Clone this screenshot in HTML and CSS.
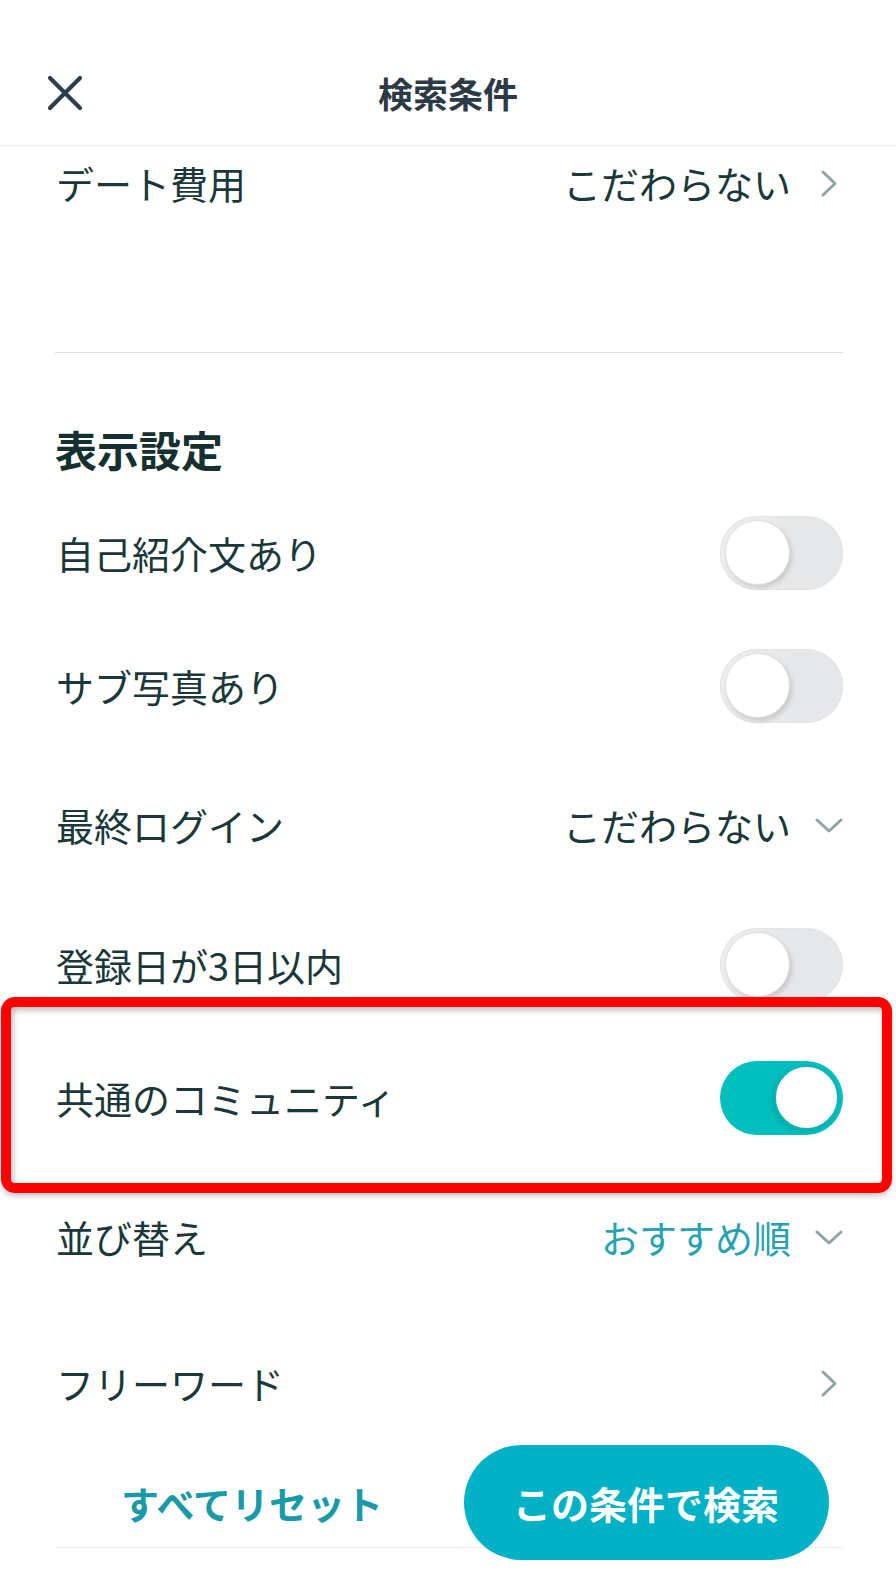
FILE: index.html
```html
<!DOCTYPE html>
<html lang="ja">
<head>
<meta charset="utf-8">
<title>検索条件</title>
<link rel="stylesheet" href="styles.css">
</head>
<body>
<div class="screen">
  <header class="topbar">
    <button class="close" aria-label="閉じる">
      <svg width="36" height="36" viewBox="0 0 36 36"><path d="M3 3 L33 33 M33 3 L3 33" stroke="#2c3e4c" stroke-width="4.2" stroke-linecap="round" fill="none"/></svg>
    </button>
    <h1 class="title">検索条件</h1>
    <span></span>
  </header>

  <main class="content">
    <div class="row row-top">
      <span class="label">デート費用</span>
      <span class="value">こだわらない<span class="icon"><svg width="16" height="27" viewBox="0 0 16 27"><path d="M2 2 L14 13.5 L2 25" stroke="#8ca5a6" stroke-width="3" stroke-linecap="round" stroke-linejoin="round" fill="none"/></svg></span></span>
    </div>

    <hr class="divider">

    <h2 class="section-title">表示設定</h2>

    <div class="row row-toggle">
      <span class="label">自己紹介文あり</span>
      <span class="toggle"><span class="knob"></span></span>
    </div>
    <div class="row row-toggle">
      <span class="label">サブ写真あり</span>
      <span class="toggle"><span class="knob"></span></span>
    </div>
    <div class="row row-select">
      <span class="label">最終ログイン</span>
      <span class="value">こだわらない<span class="icon"><svg width="28" height="15" viewBox="0 0 28 15"><path d="M2 2 L14 13 L26 2" stroke="#8ca5a6" stroke-width="3" stroke-linecap="round" stroke-linejoin="round" fill="none"/></svg></span></span>
    </div>
    <div class="row row-toggle">
      <span class="label">登録日が3日以内</span>
      <span class="toggle"><span class="knob"></span></span>
    </div>
    <div class="row row-toggle">
      <span class="label">共通のコミュニティ</span>
      <span class="toggle is-on"><span class="knob"></span></span>
    </div>
    <div class="row row-select">
      <span class="label">並び替え</span>
      <span class="value accent">おすすめ順<span class="icon"><svg width="28" height="15" viewBox="0 0 28 15"><path d="M2 2 L14 13 L26 2" stroke="#8ca5a6" stroke-width="3" stroke-linecap="round" stroke-linejoin="round" fill="none"/></svg></span></span>
    </div>
    <div class="row row-last">
      <span class="label">フリーワード</span>
      <span class="value"><span class="icon"><svg width="16" height="27" viewBox="0 0 16 27"><path d="M2 2 L14 13.5 L2 25" stroke="#8ca5a6" stroke-width="3" stroke-linecap="round" stroke-linejoin="round" fill="none"/></svg></span></span>
    </div>

    <div class="footer">
      <button class="reset">すべてリセット</button>
      <div class="submit-cell"><button class="submit">この条件で検索</button></div>
    </div>
  </main>

  <div class="highlight"></div>
</div>
</body>
</html>
```

FILE: styles.css
```css
* { box-sizing: border-box; }

html, body {
  margin: 0;
  padding: 0;
  background: #ffffff;
}

body {
  font-family: "Noto Sans CJK JP", "Noto Sans", sans-serif;
  color: #1a3839;
  overflow: hidden;
}

.screen {
  position: relative;
  width: 896px;
  height: 1576px;
  overflow: hidden;
}

.topbar {
  height: 146px;
  padding: 40px 47px 0 47px;
  display: grid;
  grid-template-columns: 1fr auto 1fr;
  align-items: center;
  border-bottom: 1px solid #eeeeee;
}

.close {
  width: 36px;
  height: 36px;
  padding: 0;
  border: 0;
  background: none;
  display: flex;
}

.title {
  margin: 0;
  font-size: 35px;
  font-weight: 700;
  color: #2c3a46;
  line-height: 40px;
}

.content {
  padding: 0 53px 0 55px;
}

.row {
  display: flex;
  align-items: center;
  justify-content: space-between;
}

.label {
  font-size: 38px;
  line-height: 48px;
  padding-left: 1px;
}

.value {
  display: flex;
  align-items: center;
  gap: 24px;
  font-size: 38px;
  line-height: 48px;
}

.value.accent {
  color: #27a2b2;
}

.icon {
  width: 28px;
  display: flex;
  justify-content: center;
  align-items: center;
}

.row-top {
  height: 74px;
  margin-bottom: 132px;
}

.divider {
  margin: 0;
  border: 0;
  height: 1px;
  background: #d9e1e1;
}

.section-title {
  margin: 0;
  padding: 72px 0 13px 0;
  font-size: 42px;
  line-height: 48px;
  font-weight: 700;
  color: #16302f;
}

.row-toggle { height: 133px; }
.row-select { height: 146px; }
.row-last { height: 135px; padding-top: 11px; }

.toggle {
  width: 123px;
  height: 74px;
  border-radius: 37px;
  background: linear-gradient(90deg, #eeeff0 0%, #e6e7e9 60%);
  box-shadow: inset 0 0 0 1px #e2e3e5;
  display: flex;
  align-items: center;
  padding: 0 5px;
}

.knob {
  width: 65px;
  height: 65px;
  border-radius: 50%;
  background: #ffffff;
  border: 1px solid #e0e0e0;
  box-shadow: 2px 3px 5px rgba(0, 0, 0, 0.14);
}

.toggle.is-on {
  background: #00bfbd;
  box-shadow: none;
  justify-content: flex-end;
  padding: 0 4px;
}

.toggle.is-on .knob {
  border: 2px solid #12b4b3;
  box-shadow: -2px 2px 4px rgba(0, 80, 80, 0.18);
}

.footer {
  height: 103px;
  display: grid;
  grid-template-columns: 1fr 1fr;
  border-bottom: 1px solid #e8eeee;
}

.reset {
  align-self: start;
  height: 115px;
  border: 0;
  background: none;
  padding: 0;
  font-family: inherit;
  font-size: 38px;
  font-weight: 700;
  color: #1a9aa9;
}

.submit-cell {
  display: flex;
  justify-content: center;
  align-items: flex-start;
}

.submit {
  width: 365px;
  height: 115px;
  border: 0;
  border-radius: 58px;
  background: #01b1c6;
  color: #ffffff;
  font-family: inherit;
  font-size: 38px;
  font-weight: 700;
  padding: 0;
}

.highlight {
  position: absolute;
  left: 1px;
  top: 997px;
  width: 891px;
  height: 196px;
  border: 10px solid #ff0000;
  border-radius: 14px;
  box-shadow: inset 2px 3px 6px rgba(0, 0, 0, 0.28), 0 3px 5px rgba(0, 0, 0, 0.22);
  pointer-events: none;
}
```
